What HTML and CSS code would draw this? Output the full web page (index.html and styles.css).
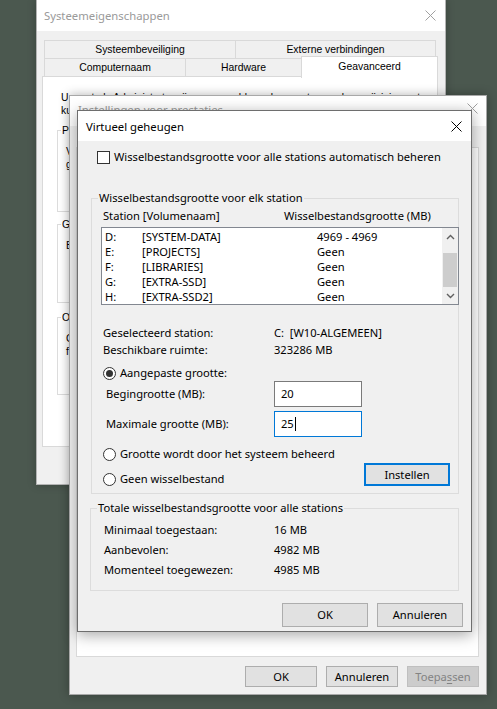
FILE: index.html
```
<!DOCTYPE html>
<html lang="nl">
<head>
<meta charset="utf-8">
<title>Virtueel geheugen</title>
<link rel="stylesheet" href="styles.css">
</head>
<body>
<div class="desktop">

  <section class="win win-sys">
    <header class="titlebar titlebar-sys">
      <span class="title title-inactive">Systeemeigenschappen</span>
      <svg class="close close-inactive" width="11" height="11" viewBox="0 0 11 11"><path d="M0.5 0.5 L10.5 10.5 M10.5 0.5 L0.5 10.5" stroke="#a0a0a0" stroke-width="1" fill="none"/></svg>
    </header>
    <div class="sys-body">
      <div class="tabs">
        <div class="tabrow tabrow-1">
          <div class="tab tab-sb">Systeembeveiliging</div>
          <div class="tab tab-ev">Externe verbindingen</div>
        </div>
        <div class="tabrow tabrow-2">
          <div class="tab tab-cn">Computernaam</div>
          <div class="tab tab-hw">Hardware</div>
          <div class="tab tab-ga tab-sel">Geavanceerd</div>
        </div>
      </div>
      <div class="sys-panel">
        <p class="admin-note">U moet als Administrator zijn aangemeld om de meeste van deze wijzigingen te<br>kunnen aanbrengen.</p>
        <fieldset class="sys-group sys-group-1">
          <legend>Prestaties</legend>
          <p class="sys-group-text">Visuele effecten, processorplanning, geheugengebruik en virtueel<br>geheugen</p>
        </fieldset>
        <fieldset class="sys-group sys-group-2">
          <legend>Gebruikersprofielen</legend>
          <p class="sys-group-text">Bureaubladinstellingen met betrekking tot uw aanmelding</p>
        </fieldset>
        <fieldset class="sys-group sys-group-3">
          <legend>Opstart- en herstelinstellingen</legend>
          <p class="sys-group-text">Computer opstarten, systeemfouten en<br>foutopsporingsgegevens</p>
        </fieldset>
      </div>
    </div>
  </section>

  <section class="win win-perf">
    <header class="titlebar titlebar-perf">
      <span class="title title-inactive">Instellingen voor prestaties</span>
      <svg class="close close-perf" width="11" height="11" viewBox="0 0 11 11"><path d="M0.5 0.5 L10.5 10.5 M10.5 0.5 L0.5 10.5" stroke="#a0a0a0" stroke-width="1" fill="none"/></svg>
    </header>
    <div class="perf-body">
      <div class="perf-tabs">
        <div class="tab ptab">Visuele effecten</div>
        <div class="tab ptab tab-sel">Geavanceerd</div>
        <div class="tab ptab">Preventie van uitvoering van gegevens</div>
      </div>
      <div class="perf-panel"></div>
      <div class="perf-buttons">
        <div class="btn btn-perf">OK</div>
        <div class="btn btn-perf">Annuleren</div>
        <div class="btn btn-perf btn-disabled">Toepa<u>s</u>sen</div>
      </div>
    </div>
  </section>

  <section class="win win-vm">
    <header class="titlebar titlebar-vm">
      <span class="title">Virtueel geheugen</span>
      <svg class="close close-vm" width="11" height="11" viewBox="0 0 11 11"><path d="M0.5 0.5 L10.5 10.5 M10.5 0.5 L0.5 10.5" stroke="#000" stroke-width="1" fill="none"/></svg>
    </header>
    <div class="vm-body">
      <div class="check-row">
        <span class="checkbox"></span>
        <span>Wisselbestandsgrootte voor alle stations automatisch beheren</span>
      </div>

      <fieldset class="group group-1">
        <legend>Wisselbestandsgrootte voor elk station</legend>
        <div class="list-head">
          <span class="col-station">Station [Volumenaam]</span>
          <span>Wisselbestandsgrootte (MB)</span>
        </div>
        <div class="listbox">
          <div class="list-rows">
            <div class="list-row"><span class="c-drive">D:</span><span class="c-vol">[SYSTEM-DATA]</span><span>4969 - 4969</span></div>
            <div class="list-row"><span class="c-drive">E:</span><span class="c-vol">[PROJECTS]</span><span>Geen</span></div>
            <div class="list-row"><span class="c-drive">F:</span><span class="c-vol">[LIBRARIES]</span><span>Geen</span></div>
            <div class="list-row"><span class="c-drive">G:</span><span class="c-vol">[EXTRA-SSD]</span><span>Geen</span></div>
            <div class="list-row"><span class="c-drive">H:</span><span class="c-vol">[EXTRA-SSD2]</span><span>Geen</span></div>
          </div>
          <div class="scrollbar">
            <div class="sb-arrow"><svg width="9" height="6" viewBox="0 0 9 6"><path d="M1 5 L4.5 1.5 L8 5" stroke="#606060" stroke-width="1.4" fill="none"/></svg></div>
            <div class="sb-track"><div class="sb-thumb"></div></div>
            <div class="sb-arrow"><svg width="9" height="6" viewBox="0 0 9 6"><path d="M1 1 L4.5 4.5 L8 1" stroke="#606060" stroke-width="1.4" fill="none"/></svg></div>
          </div>
        </div>

        <div class="info-row info-first"><span class="info-label">Geselecteerd station:</span><span>C:&nbsp; [W10-ALGEMEEN]</span></div>
        <div class="info-row info-second"><span class="info-label">Beschikbare ruimte:</span><span>323286 MB</span></div>

        <div class="radio-row radio-custom"><span class="radio radio-on"></span><span>Aangepaste grootte:</span></div>
        <div class="field-row field-first"><span class="field-label">Begingrootte (MB):</span><span class="textbox">20</span></div>
        <div class="field-row field-second"><span class="field-label">Maximale grootte (MB):</span><span class="textbox textbox-focus">25<span class="caret"></span></span></div>

        <div class="radio-row radio-system"><span class="radio"></span><span>Grootte wordt door het systeem beheerd</span></div>
        <div class="radio-btn-row">
          <div class="radio-row radio-none"><span class="radio"></span><span>Geen wisselbestand</span></div>
          <div class="btn btn-set">Instellen</div>
        </div>
      </fieldset>

      <fieldset class="group group-2">
        <legend>Totale wisselbestandsgrootte voor alle stations</legend>
        <div class="total-row"><span class="total-label">Minimaal toegestaan:</span><span>16 MB</span></div>
        <div class="total-row"><span class="total-label">Aanbevolen:</span><span>4982 MB</span></div>
        <div class="total-row"><span class="total-label">Momenteel toegewezen:</span><span>4985 MB</span></div>
      </fieldset>

      <div class="vm-buttons">
        <div class="btn btn-vm">OK</div>
        <div class="btn btn-vm">Annuleren</div>
      </div>
    </div>
  </section>

</div>
</body>
</html>
```

FILE: styles.css
```
* { box-sizing: border-box; }
html, body { margin: 0; padding: 0; }
body { width: 497px; height: 709px; overflow: hidden; background: #4b584f; }

.desktop {
  position: relative;
  width: 497px;
  height: 709px;
  overflow: hidden;
  background: #4b584f;
  font-family: "Noto Sans", "Open Sans", sans-serif;
  font-size: 11.15px;
  color: #000;
}

.win { position: absolute; background: #f0f0f0; }

/* ---------- generic title bar ---------- */
.titlebar {
  display: flex;
  align-items: center;
  background: #fff;
  font-family: "Noto Sans", "Open Sans", sans-serif;
  font-size: 11.3px;
}
.title { white-space: nowrap; }
.title-inactive { color: #9a9a9a; }
.close { margin-left: auto; flex: none; }

/* ---------- Systeemeigenschappen ---------- */
.win-sys {
  z-index: 1;
  left: 36px; top: 0; width: 410px; height: 485px;
  border: 1px solid #b4b4b4; border-top: none;
  font-family: "Liberation Sans", Arial, sans-serif;
  font-size: 10.4px;
  box-shadow: 0 0 8px rgba(0,0,0,0.25);
}
.titlebar-sys { height: 31px; padding-left: 7px; }
.close-inactive { margin-right: 9px; }

.sys-body { padding-top: 9px; }
.tabs { margin-left: 7px; }
.tabrow { display: flex; height: 19px; }
.tabrow-2 { margin-top: -1px; }
.tab {
  display: flex; align-items: center; justify-content: center;
  border: 1px solid #d9d9d9;
  background: #f0f0f0;
  white-space: nowrap;
}
.tab + .tab { margin-left: -1px; }
.tab-sb { width: 192px; }
.tab-ev { width: 201px; }
.tab-cn { width: 142px; }
.tab-hw { width: 117px; }
.tab-ga { width: 137px; }
.tab-sel {
  background: #fff;
  border-bottom: none;
  margin-top: -2px;
  height: 22px;
  padding-bottom: 3px;
  position: relative;
  z-index: 2;
}

.sys-panel {
  margin-left: 5px;
  margin-top: -1px;
  width: 396px;
  height: 371px;
  background: #fff;
  border: 1px solid #d9d9d9;
}
.admin-note {
  margin: 0;
  padding: 14px 0 0 18px;
  line-height: 13px;
  white-space: nowrap;
}
.sys-group {
  margin: 0 0 0 14px;
  padding: 0;
  width: 365px;
  border: 1px solid #dcdcdc;
  min-inline-size: 0;
}
.sys-group legend {
  margin-left: 3px;
  padding: 0 1px;
  line-height: 13px;
  height: 13px;
}
.sys-group-1 { margin-top: 7px; height: 88px; }
.sys-group-2 { margin-top: 6px; height: 85px; }
.sys-group-3 { margin-top: 8px; height: 84px; }
.sys-group-text {
  margin: 8px 0 0 8px;
  line-height: 13px;
  white-space: nowrap;
}

/* ---------- Instellingen voor prestaties ---------- */
.win-perf {
  z-index: 2;
  left: 69px; top: 95px; width: 418px; height: 600px;
  border: 1px solid #a8a8a8;
  font-family: "Liberation Sans", Arial, sans-serif;
  font-size: 10.4px;
  box-shadow: 0 0 10px rgba(0,0,0,0.3);
}
.titlebar-perf { height: 30px; padding-left: 8px; padding-bottom: 4px; }
.close-perf { margin-right: 8px; margin-top: -2px; }

.perf-body { display: flex; flex-direction: column; }
.perf-tabs { display: flex; margin: 3px 0 0 8px; height: 19px; }
.ptab { padding: 0 6px; }
.perf-panel {
  margin-left: 6px;
  margin-top: -1px;
  width: 403px;
  height: 510px;
  background: #fff;
  border: 1px solid #d9d9d9;
}
.perf-buttons {
  display: flex;
  justify-content: flex-end;
  gap: 9px;
  margin-top: 9px;
  padding-right: 7px;
}

.btn {
  display: flex; align-items: center; justify-content: center;
  background: #e1e1e1;
  border: 1px solid #adadad;
  white-space: nowrap;
}
.btn-perf { width: 72px; height: 21px; font-family: "Noto Sans", "Open Sans", sans-serif; font-size: 11.15px; }
.btn-disabled { background: #cccccc; border-color: #bfbfbf; color: #838383; }
.btn-disabled u { text-decoration-thickness: 1px; text-underline-offset: 2px; }

/* ---------- Virtueel geheugen ---------- */
.win-vm {
  z-index: 3;
  left: 77px; top: 110px; width: 395px; height: 522px;
  border: 1px solid #6e6e6e;
  box-shadow: 0 3px 14px rgba(0,0,0,0.35);
}
.titlebar-vm { height: 30px; padding-left: 8px; }
.close-vm { margin-right: 9px; }

.vm-body { display: flex; flex-direction: column; line-height: 14px; }

.check-row {
  display: flex; align-items: center; gap: 4px;
  height: 16px;
  margin: 8px 0 0 19px;
}
.checkbox {
  width: 13px; height: 13px;
  border: 1px solid #333;
  background: #fff;
  flex: none;
}

.group {
  margin: 0 0 0 13px;
  padding: 0;
  width: 368px;
  border: 1px solid #dcdcdc;
  min-inline-size: 0;
}
.group legend {
  margin-left: 6px;
  padding: 0 1px;
  line-height: 14px;
  height: 14px;
  white-space: nowrap;
}
.group-1 { margin-top: 26px; padding-bottom: 7px; }
.group-2 { margin-top: 7px; margin-left: 12px; width: 369px; padding: 5px 0 10px 0; }

.list-head {
  display: flex;
  height: 14px;
  margin-top: 4px;
  padding-left: 11px;
  white-space: nowrap;
}
.col-station { width: 181px; }

.listbox {
  display: flex;
  margin: 4px 0 0 9px;
  width: 358px;
  height: 78px;
  border: 1px solid #828790;
  background: #fff;
}
.list-rows { flex: 1; padding-top: 1px; }
.list-row {
  display: flex;
  height: 15px;
  line-height: 15px;
  padding-left: 3px;
  white-space: nowrap;
}
.c-drive { width: 37px; }
.c-vol { width: 175px; }

.scrollbar {
  width: 16px;
  display: flex;
  flex-direction: column;
  background: #f0f0f0;
}
.sb-arrow {
  height: 17px;
  display: flex; align-items: center; justify-content: center;
}
.sb-track { flex: 1; padding-top: 8px; }
.sb-thumb { height: 34px; margin: 0 1px; background: #cdcdcd; }

.info-row {
  display: flex;
  height: 14px;
  padding-left: 11px;
  white-space: nowrap;
}
.info-first { margin-top: 21px; }
.info-second { margin-top: 3px; }
.info-label { width: 171px; }

.radio-row {
  display: flex; align-items: center; gap: 4px;
  height: 14px;
  padding-left: 11px;
  white-space: nowrap;
}
.radio {
  width: 13px; height: 13px;
  border: 1px solid #333;
  border-radius: 50%;
  background: #fff;
  flex: none;
  display: flex; align-items: center; justify-content: center;
}
.radio-on::after {
  content: "";
  width: 7px; height: 7px;
  border-radius: 50%;
  background: #333;
}
.radio-custom { margin-top: 9px; }
.radio-system { margin-top: 10px; }

.field-row {
  display: flex; align-items: center;
  height: 26px;
  padding-left: 14px;
  white-space: nowrap;
}
.field-first { margin-top: 1px; }
.field-second { margin-top: 4px; }
.field-label { width: 168px; }
.textbox {
  display: flex; align-items: center;
  width: 88px; height: 26px;
  padding-left: 6px;
  border: 1px solid #7a7a7a;
  background: #fff;
}
.textbox-focus { border-color: #0078d7; }
.caret { width: 1px; height: 14px; background: #000; margin-left: 1px; }

.radio-btn-row {
  display: flex;
  align-items: flex-end;
  height: 23px;
  margin-top: 2px;
}
.btn-set {
  margin-left: auto;
  margin-right: 8px;
  width: 86px; height: 23px;
  border: 2px solid #0078d7;
}

.total-row {
  display: flex; align-items: center;
  height: 20px;
  padding-left: 13px;
  white-space: nowrap;
}
.total-label { width: 170px; }

.vm-buttons {
  display: flex;
  justify-content: flex-end;
  gap: 9px;
  margin-top: 12px;
  padding-right: 8px;
}
.btn-vm { width: 86px; height: 24px; }
```
